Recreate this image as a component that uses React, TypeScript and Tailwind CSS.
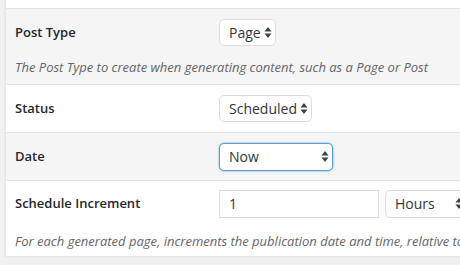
import React from "react";

function Arrows() {
  return (
    <svg width="8" height="13" viewBox="0 0 8 13" className="shrink-0">
      <path d="M4 1 L7.5 5.5 H0.5 Z" fill="#3c434a" />
      <path d="M4 12 L7.5 7.5 H0.5 Z" fill="#3c434a" />
    </svg>
  );
}

interface SelectProps {
  value: string;
  className?: string;
  focused?: boolean;
}

function FakeSelect({ value, className = "", focused }: SelectProps) {
  const border = focused
    ? "border-[#5b9dd9] shadow-[0_0_2px_rgba(30,140,190,0.8)]"
    : "border-[#ddd]";
  return (
    <div
      className={`flex items-center justify-between gap-[3px] bg-white border rounded-[5px] pl-[9px] pr-[3px] text-[14px] text-[#32373c] ${border} ${className}`}
    >
      <span>{value}</span>
      <Arrows />
    </div>
  );
}

export default function App() {
  return (
    <div className="w-[460px] h-[265px] overflow-hidden bg-[#f1f1f1] font-['Open_Sans',sans-serif]">
      <div className="ml-[5px] w-[470px] bg-white border-l border-[#e5e5e5] shadow-[0_1px_2px_rgba(0,0,0,0.07)]">
        <div className="h-[9px] border-b border-[#e5e5e5]" />

        {/* Post Type */}
        <div className="bg-[#f5f5f5] border-b border-[#e5e5e5] h-[76px] pl-[9px] pt-[10px]">
          <div className="flex items-center h-[27px]">
            <div className="w-[204px] text-[13px] font-semibold text-[#23282d]">Post Type</div>
            <FakeSelect value="Page" className="h-[27px]" />
          </div>
          <p className="mt-[12px] text-[13px] italic text-[#666] leading-[18px]">
            The Post Type to create when generating content, such as a Page or Post
          </p>
        </div>

        {/* Status */}
        <div className="bg-white border-b border-[#e5e5e5] h-[48px] pl-[9px] flex items-center">
          <div className="w-[204px] text-[13px] font-semibold text-[#23282d]">Status</div>
          <FakeSelect value="Scheduled" className="h-[27px]" />
        </div>

        {/* Date */}
        <div className="bg-[#f5f5f5] border-b border-[#e5e5e5] h-[48px] pl-[9px] flex items-center">
          <div className="w-[204px] text-[13px] font-semibold text-[#23282d]">Date</div>
          <FakeSelect value="Now" focused className="w-[114px] h-[28px]" />
        </div>

        {/* Schedule Increment */}
        <div className="bg-white h-[75px] pl-[9px] pt-[8px]">
          <div className="flex items-center h-[29px]">
            <div className="w-[204px] text-[13px] font-semibold text-[#23282d]">Schedule Increment</div>
            <div className="w-[160px] h-[28px] bg-white border border-[#ddd] pl-[9px] flex items-center text-[14px] text-[#32373c]">
              1
            </div>
            <FakeSelect value="Hours" className="ml-[6px] w-[82px] h-[28px]" />
          </div>
          <p className="mt-[14px] text-[13px] italic text-[#666] leading-[18px] whitespace-nowrap">
            For each generated page, increments the publication date and time, relative to the previous page
          </p>
        </div>
      </div>
    </div>
  );
}
